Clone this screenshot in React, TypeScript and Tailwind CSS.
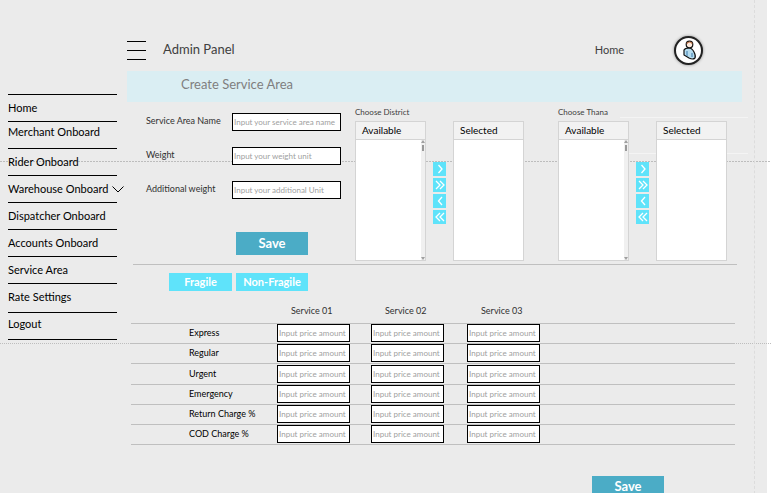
import React from "react";

const menu = [
  { label: "Home", size: "h-[27px]" },
  { label: "Merchant Onboard", size: "h-[27px] pb-1.5" },
  { label: "Rider Onboard", size: "h-[27px]" },
  { label: "Warehouse Onboard", size: "h-[27px]", chevron: true },
  { label: "Dispatcher Onboard", size: "h-[27px]" },
  { label: "Accounts Onboard", size: "h-[27px]" },
  { label: "Service Area", size: "h-[27px]" },
  { label: "Rate Settings", size: "h-[29px] pb-0.5" },
  { label: "Logout", size: "h-[27px] pb-1" },
];

const fields = [
  { id: "area", label: "Service Area Name", hint: "Input your service area name" },
  { id: "weight", label: "Weight", hint: "Input your weight unit" },
  { id: "extra", label: "Additional weight", hint: "Input your additional Unit" },
];

const services = ["Service 01", "Service 02", "Service 03"];
const charges = [
  { name: "Express", size: "h-5" },
  { name: "Regular", size: "h-5" },
  { name: "Urgent", size: "h-[21px]" },
  { name: "Emergency", size: "h-5" },
  { name: "Return Charge %", size: "h-5" },
  { name: "COD Charge %", size: "h-5" },
];

const arrows = [
  { name: "Add", d: "M5.500 3l3.500 4-3.500 4" },
  { name: "Add all", d: "M3 3l4 4-4 4M7 3l4 4-4 4" },
  { name: "Remove", d: "M9 3L5.500 7l3.500 4" },
  { name: "Remove all", d: "M7 3L3 7l4 4M11 3L7 7l4 4" },
];

const inputStyle =
  "block h-[18px] rounded-none border border-black bg-white px-px text-[8px] text-black outline-none placeholder:text-[#a0a0a0] placeholder:opacity-100";

function ListBox({ title, scroll }: { title: string; scroll?: boolean }) {
  return (
    <div className="flex h-[140px] w-[71px] flex-col border border-[#d4d4d4] bg-white">
      <h3 className="h-[18px] border-b border-[#d4d4d4] bg-[#f2f2f2] pl-1.5 text-[10px] leading-4 text-black">{title}</h3>
      <div className="flex flex-1 justify-end">
        {scroll && (
          <div className="flex w-1 flex-col items-center justify-between bg-[#f0f0f0]">
            <div className="flex flex-col items-center gap-0.5">
              <svg width="4" height="3" viewBox="0 0 4 3"><path d="M0 3L2 0l2 3z" fill="#a0a0a0" /></svg>
              <div className="h-1.5 w-0.5 bg-[#999]" />
            </div>
            <svg width="4" height="3" viewBox="0 0 4 3"><path d="M0 0h4L2 3z" fill="#a0a0a0" /></svg>
          </div>
        )}
      </div>
    </div>
  );
}

function Picker({ title }: { title: string }) {
  return (
    <section className="pt-1">
      <h2 className="h-[15px] text-[8px] leading-3 text-[#404040]">{title}</h2>
      <div className="flex">
        <ListBox title="Available" scroll />
        <div className="mx-[7px] flex w-[13px] flex-col gap-0.5 pt-[41px]">
          {arrows.map((a) => (
            <button key={a.name} type="button" aria-label={a.name} className="flex h-3.5 items-center justify-center bg-[#5fe3fa]">
              <svg width="14" height="14" viewBox="0 0 14 14" className="shrink-0">
                <path d={a.d} fill="none" stroke="white" strokeWidth="1.300" />
              </svg>
            </button>
          ))}
        </div>
        <ListBox title="Selected" />
      </div>
    </section>
  );
}

function Avatar() {
  return (
    <button type="button" aria-label="Account" className="flex size-[29px] items-center justify-center rounded-full border-2 border-[#222] bg-white shadow-[0_0_3px_#888]">
      <svg width="18" height="22" viewBox="0 0 18 22" className="shrink-0">
        <path d="M4 11q1-2 5-2 3 0 5 4 2 4 1 6-2 2-6 0l-5-3z" fill="#b5dcef" stroke="#111" strokeWidth="1.200" />
        <path d="M7 12v5M12 14v4" stroke="#3b78ab" strokeWidth="1" />
        <circle cx="9.500" cy="5.500" r="3.300" fill="#fde9dc" stroke="#111" strokeWidth="1.200" />
        <path d="M6.700 4.500q3-3 5.600 0" fill="none" stroke="#b96a3c" strokeWidth="1.200" />
      </svg>
    </button>
  );
}

export default function App() {
  return (
    <div className="relative isolate flex min-h-screen border-r-4 border-white bg-[#ebebeb] font-['Lato',sans-serif]">
      <div aria-hidden="true" className="absolute top-[117px] right-[19px] -z-10 h-px w-32 bg-[#f4f4f4]" />
      <div aria-hidden="true" className="absolute top-[153px] right-[19px] -z-10 h-px w-32 bg-[#f4f4f4]" />
      <div aria-hidden="true" className="absolute -right-1 left-0 top-[161px] -z-10 h-px bg-[repeating-linear-gradient(90deg,#bdbdbd_0px_2px,transparent_2px_3px)]" />
      <div aria-hidden="true" className="absolute -right-1 left-0 top-[343px] -z-10 h-px bg-[repeating-linear-gradient(90deg,#bdbdbd_0px_1px,transparent_1px_2px)]" />
      <div aria-hidden="true" className="absolute inset-y-0 right-3 -z-10 border-l border-dashed border-[#dcdcdc]" />

      <nav className="w-[127px] shrink-0 pt-[94px] pl-2">
        <ul className="w-[109px] border-t border-black">
          {menu.map((m) => (
            <li key={m.label} className={`flex items-center border-b border-black ${m.size}`}>
              <a href="#" className="flex items-center gap-1 text-[11px] leading-4 whitespace-nowrap text-black">
                {m.label}
                {m.chevron && (
                  <svg width="12" height="7" viewBox="0 0 12 7" className="shrink-0">
                    <path d="M.5.500L6 6 11.500.500" fill="none" stroke="black" />
                  </svg>
                )}
              </a>
            </li>
          ))}
        </ul>
      </nav>

      <main className="min-w-0 flex-1">
        <header className="flex h-[71px] items-center pt-[29px] pr-16">
          <button type="button" aria-label="Menu" className="flex w-[19px] flex-col gap-2">
            <span className="h-px bg-black" />
            <span className="h-px bg-black" />
            <span className="h-px bg-black" />
          </button>
          <h1 className="ml-[17px] text-[13px] text-[#404040]">Admin Panel</h1>
          <div className="ml-auto flex items-center gap-[50px]">
            <a href="#" className="text-[11px] text-[#404040]">Home</a>
            <Avatar />
          </div>
        </header>

        <h2 className="mr-[25px] h-[31px] bg-[#daeef3] pl-[54px] text-[13px] leading-[26px] text-[#7f7f7f]">Create Service Area</h2>

        <div className="mr-[30px] ml-1.5 flex h-[163px] border-b border-[#bfbfbf] pl-[13px]">
          <form className="flex w-[209px] shrink-0 flex-col pt-[11px]">
            <div className="flex flex-col gap-4">
              {fields.map((f) => (
                <div key={f.id} className="flex items-center">
                  <label htmlFor={f.id} className="w-[86px] pb-0.5 text-[9px] whitespace-nowrap text-[#303030]">{f.label}</label>
                  <input id={f.id} placeholder={f.hint} className={`w-[109px] ${inputStyle}`} />
                </div>
              ))}
            </div>
            <button type="button" className="mt-[33px] ml-[90px] h-[23px] w-[72px] bg-[#4bacc6] text-[13px] font-bold text-white">Save</button>
          </form>
          <div className="flex gap-[34px]">
            <Picker title="Choose District" />
            <Picker title="Choose Thana" />
          </div>
        </div>

        <div className="flex gap-1 pt-2 pl-[42px] text-[11px] font-bold text-white">
          <button type="button" className="h-[18px] w-[63px] bg-[#5fe3fa]">Fragile</button>
          <button type="button" className="h-[18px] w-[72px] bg-[#5fe3fa]">Non-Fragile</button>
        </div>

        <div className="mt-2 mr-8 ml-1">
          <table className="w-full table-fixed border-collapse text-left">
            <colgroup>
              <col className="w-[146px]" />
              <col className="w-[94px]" />
              <col className="w-24" />
              <col className="w-24" />
              <col />
            </colgroup>
            <thead>
              <tr className="h-6 border-b border-[#bfbfbf]">
                <td />
                {services.map((s) => (
                  <th key={s} scope="col" className="p-0 pl-3.5 text-[9px] font-normal text-[#303030]">{s}</th>
                ))}
                <td />
              </tr>
            </thead>
            <tbody>
              {charges.map((c) => (
                <tr key={c.name} className={`border-b border-[#bfbfbf] ${c.size}`}>
                  <th scope="row" className="p-0 pl-[58px] text-[9px] leading-4 font-normal whitespace-nowrap text-black">{c.name}</th>
                  {services.map((s) => (
                    <td key={s} className="p-0">
                      <input aria-label={`${c.name}, ${s}`} placeholder="Input price amount" className={`w-[73px] ${inputStyle}`} />
                    </td>
                  ))}
                  <td />
                </tr>
              ))}
            </tbody>
          </table>
        </div>

        <div className="flex justify-end pt-[31px] pr-[103px]">
          <button type="button" className="h-[23px] w-[72px] bg-[#4bacc6] text-[13px] font-bold text-white">Save</button>
        </div>
      </main>
    </div>
  );
}
